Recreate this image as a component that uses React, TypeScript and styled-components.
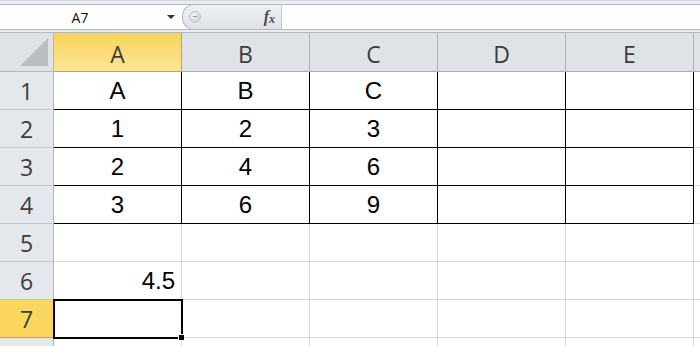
import React from 'react'
import styled, { createGlobalStyle } from 'styled-components'

const GlobalStyle = createGlobalStyle`
  html, body {
    margin: 0;
    padding: 0;
    background: #ffffff;
    overflow: hidden;
  }
`

const columns = ['A', 'B', 'C', 'D', 'E', '']

// last row only peeks in at the bottom edge, so its number is not shown
const rows: { label: string; values: string[]; bordered: boolean }[] = [
  { label: '1', values: ['A', 'B', 'C', '', '', ''], bordered: true },
  { label: '2', values: ['1', '2', '3', '', '', ''], bordered: true },
  { label: '3', values: ['2', '4', '6', '', '', ''], bordered: true },
  { label: '4', values: ['3', '6', '9', '', '', ''], bordered: true },
  { label: '5', values: ['', '', '', '', '', ''], bordered: false },
  { label: '6', values: ['4.5', '', '', '', '', ''], bordered: false },
  { label: '7', values: ['', '', '', '', '', ''], bordered: false },
  { label: '', values: ['', '', '', '', '', ''], bordered: false },
]

const activeCol = 0
const activeRow = 6

export default function App() {
  return (
    <Window>
      <GlobalStyle />
      <FormulaBar>
        <FormulaRow>
          <NameBox>
            <NameText>A7</NameText>
            <DropArrow />
          </NameBox>
          <Capsule>
            <Grip />
            <Fx>
              f<sub>x</sub>
            </Fx>
          </Capsule>
          <FormulaInput />
        </FormulaRow>
      </FormulaBar>
      <Sheet>
        <Corner>
          <CornerTriangle />
        </Corner>
        {columns.map((c, i) => (
          <ColHeader key={'h' + i} $active={i === activeCol}>
            {c}
          </ColHeader>
        ))}
        {rows.map((row, r) => (
          <React.Fragment key={r}>
            <RowHeader $active={r === activeRow}>{row.label}</RowHeader>
            {row.values.map((v, c) => (
              <Cell
                key={c}
                $bordered={row.bordered && c < 5}
                $right={v === '4.5'}
                $selected={r === activeRow && c === activeCol}
              >
                {v}
              </Cell>
            ))}
          </React.Fragment>
        ))}
      </Sheet>
    </Window>
  )
}

const Window = styled.div`
  width: 700px;
  height: 346px;
  overflow: hidden;
  background: #ffffff;
`

const FormulaBar = styled.div`
  height: 33px;
  box-sizing: border-box;
  padding-top: 4px;
  background: #e9ecf0;
  border-top: 1px solid #d3d7dc;
  border-bottom: 1px solid #b4b8bd;
`

const FormulaRow = styled.div`
  display: flex;
  height: 26px;
  box-sizing: border-box;
  margin-top: -1px;
  border-top: 1px solid #b3b7bc;
  border-bottom: 1px solid #b3b7bc;
  background: #ffffff;
`

const NameBox = styled.div`
  width: 182px;
  display: flex;
  align-items: center;
  position: relative;
  background: #ffffff;
`

const NameText = styled.span`
  width: 160px;
  text-align: center;
  font-family: 'Open Sans', 'Noto Sans', sans-serif;
  font-size: 14px;
  color: #111;
`

const DropArrow = styled.span`
  width: 0;
  height: 0;
  margin-left: 7px;
  border-left: 4px solid transparent;
  border-right: 4px solid transparent;
  border-top: 4px solid #333;
`

const Capsule = styled.div`
  width: 100px;
  display: flex;
  align-items: center;
  justify-content: space-between;
  box-sizing: border-box;
  padding: 0 6px 0 6px;
  background: linear-gradient(#eef0f3, #dfe2e7);
  border: 1px solid #b3b7bc;
  border-right: 1px solid #c6cacf;
  border-radius: 12px 0 0 12px;
  margin: -1px 0;
`

const Grip = styled.span`
  width: 10px;
  height: 10px;
  border-radius: 50%;
  background: radial-gradient(circle at 40% 35%, #f4f5f7, #c3c7cc);
  border: 1px solid #c0c4c9;
  position: relative;
  &::after {
    content: '';
    position: absolute;
    left: 3px;
    top: 4px;
    width: 4px;
    height: 1px;
    background: #8d9197;
  }
`

const Fx = styled.span`
  font-family: 'Liberation Serif', serif;
  font-style: italic;
  font-weight: bold;
  font-size: 16px;
  color: #4a4a4a;
  sub {
    font-size: 12px;
    vertical-align: -1px;
  }
`

const FormulaInput = styled.div`
  flex: 1;
  background: #ffffff;
`

const Sheet = styled.div`
  display: grid;
  grid-template-columns: 54px repeat(5, 128px) 1fr;
  grid-template-rows: 39px repeat(8, 38px);
  font-family: 'Liberation Sans', Arial, sans-serif;
`

const Corner = styled.div`
  position: relative;
  background: #dfe3e8;
  border-right: 1px solid #b1b5ba;
  border-bottom: 1px solid #b1b5ba;
`

const CornerTriangle = styled.div`
  position: absolute;
  right: 5px;
  bottom: 5px;
  width: 0;
  height: 0;
  border-left: 28px solid transparent;
  border-bottom: 28px solid #b9bdc2;
`

const ColHeader = styled.div<{ $active: boolean }>`
  display: flex;
  align-items: center;
  justify-content: center;
  padding-top: 3px;
  box-sizing: border-box;
  font-family: 'Open Sans', 'Noto Sans', sans-serif;
  font-size: 23px;
  color: #3c3c3c;
  background: ${(p) =>
    p.$active ? 'linear-gradient(#f9d35c, #fde594)' : '#dfe3e8'};
  border-right: 1px solid ${(p) => (p.$active ? '#c2a54f' : '#b1b5ba')};
  border-bottom: 1px solid ${(p) => (p.$active ? '#c2a54f' : '#a9adb2')};
`

const RowHeader = styled.div<{ $active: boolean }>`
  display: flex;
  align-items: center;
  justify-content: center;
  box-sizing: border-box;
  font-family: 'Open Sans', 'Noto Sans', sans-serif;
  font-size: 23px;
  color: #3c3c3c;
  background: ${(p) => (p.$active ? '#fcd760' : '#e4e7eb')};
  border-right: 1px solid #b1b5ba;
  border-bottom: 1px solid ${(p) => (p.$active ? '#c2a54f' : '#c3c7cc')};
`

const Cell = styled.div<{ $bordered: boolean; $right: boolean; $selected: boolean }>`
  position: relative;
  display: flex;
  align-items: center;
  justify-content: ${(p) => (p.$right ? 'flex-end' : 'center')};
  padding: 0 6px;
  box-sizing: border-box;
  font-size: 24px;
  color: #000;
  background: #ffffff;
  border-right: 1px solid ${(p) => (p.$bordered ? '#000000' : '#d9d9d9')};
  border-bottom: 1px solid ${(p) => (p.$bordered ? '#000000' : '#d9d9d9')};

  ${(p) =>
    p.$selected &&
    `
    &::before {
      content: '';
      position: absolute;
      left: -1px;
      top: -1px;
      right: -2px;
      bottom: -2px;
      border: 2px solid #000;
      z-index: 2;
    }
    &::after {
      content: '';
      position: absolute;
      right: -4px;
      bottom: -4px;
      width: 5px;
      height: 5px;
      background: #000;
      border: 1px solid #fff;
      z-index: 3;
    }
  `}
`
